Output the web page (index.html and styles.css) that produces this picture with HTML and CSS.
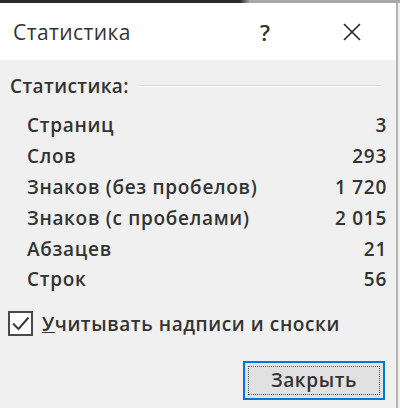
FILE: index.html
```html
<!DOCTYPE html>
<html lang="ru">

<head>
    <meta charset="UTF-8">
    <meta name="viewport" content="width=device-width, initial-scale=1.0">
    <title>Статистика</title>
    <link rel="stylesheet" href="styles.css">
</head>

<body>
    <div class="top-strip"></div>
    <div class="dialog">
        <div class="titlebar">
            <span class="title">Статистика</span>
            <span class="help">?</span>
            <span class="close">
                <svg width="20" height="20" viewBox="0 0 20 20">
                    <path d="M2 2 L18 18 M18 2 L2 18" stroke="#222" stroke-width="1.6" fill="none" />
                </svg>
            </span>
        </div>
        <div class="content">
            <div class="group-head">
                <span class="group-label">Статистика:</span>
                <span class="group-line"></span>
            </div>
            <table class="stats">
                <tr><td>Страниц</td><td class="num">3</td></tr>
                <tr><td>Слов</td><td class="num">293</td></tr>
                <tr><td>Знаков (без пробелов)</td><td class="num">1 720</td></tr>
                <tr><td>Знаков (с пробелами)</td><td class="num">2 015</td></tr>
                <tr><td>Абзацев</td><td class="num">21</td></tr>
                <tr><td>Строк</td><td class="num">56</td></tr>
            </table>
            <label class="check">
                <span class="box">
                    <svg width="19" height="19" viewBox="0 0 19 19">
                        <path d="M2 9.5 L7.5 15 L17.5 3.5" stroke="#3a3a3a" stroke-width="2" fill="none" />
                    </svg>
                </span>
                <span><u>У</u>читывать надписи и сноски</span>
            </label>
            <div class="actions">
                <button type="button" class="btn"><span class="focus">Закрыть</span></button>
            </div>
        </div>
    </div>
</body>

</html>
```

FILE: styles.css
```css
body {
    margin: 0;
    padding: 0;
    font-family: "Open Sans", "Noto Sans", sans-serif;
    color: #333;
    background-color: #f0f0f0;
    width: 400px;
    height: 408px;
    overflow: hidden;
}

.top-strip {
    height: 3px;
    background: linear-gradient(to right, #2b2b2b 0, #2b2b2b 240px, #a9a9a9 250px, #a9a9a9 100%);
}

.dialog {
    width: 396px;
    height: 405px;
    border-right: 2px solid #b4b4b4;
    display: flex;
    flex-direction: column;
}

.titlebar {
    height: 57px;
    background-color: #fff;
    display: flex;
    align-items: center;
    padding-left: 13px;
}

.title {
    flex: 1;
    font-size: 21px;
    letter-spacing: 0.4px;
    color: #333;
}

.help {
    font-size: 22px;
    font-weight: 600;
    width: 20px;
    margin-right: 62px;
    color: #333;
}

.close {
    display: flex;
    width: 20px;
    margin-right: 34px;
}

.content {
    flex: 1;
    padding: 14px 10px 0 10px;
}

.group-head {
    display: flex;
    align-items: center;
    height: 24px;
}

.group-label {
    font-size: 19px;
    font-weight: 600;
    letter-spacing: 0.4px;
}

.group-line {
    flex: 1;
    height: 0;
    border-top: 1px solid #d8d8d8;
    border-bottom: 1px solid #fff;
    margin-left: 10px;
    margin-right: 4px;
}

.stats {
    width: 360px;
    border-collapse: collapse;
    margin-top: 12px;
    margin-left: 17px;
    font-size: 19px;
    font-weight: 600;
    letter-spacing: 0.7px;
}

.stats td {
    padding: 0;
    height: 30.8px;
}

.stats .num {
    text-align: right;
}

.check {
    display: flex;
    align-items: center;
    gap: 9px;
    margin-top: 16px;
    margin-left: -2px;
    font-size: 19px;
    font-weight: 600;
    letter-spacing: 0.6px;
}

.box {
    width: 25px;
    height: 25px;
    border: 2px solid #4a4a4a;
    box-sizing: border-box;
    display: flex;
    align-items: center;
    justify-content: center;
    background-color: #fff;
}

.actions {
    display: flex;
    justify-content: flex-end;
    margin-top: 24px;
    padding-right: 1px;
}

.btn {
    width: 142px;
    height: 39px;
    padding: 3px;
    border: 2px solid #0078d7;
    background-color: #e1e1e1;
    font-family: inherit;
    font-size: 19px;
    font-weight: 600;
    letter-spacing: 0.6px;
    color: #333;
    box-sizing: border-box;
}

.focus {
    display: flex;
    align-items: center;
    justify-content: center;
    height: 100%;
    border: 1px dotted #555;
    box-sizing: border-box;
}
```
